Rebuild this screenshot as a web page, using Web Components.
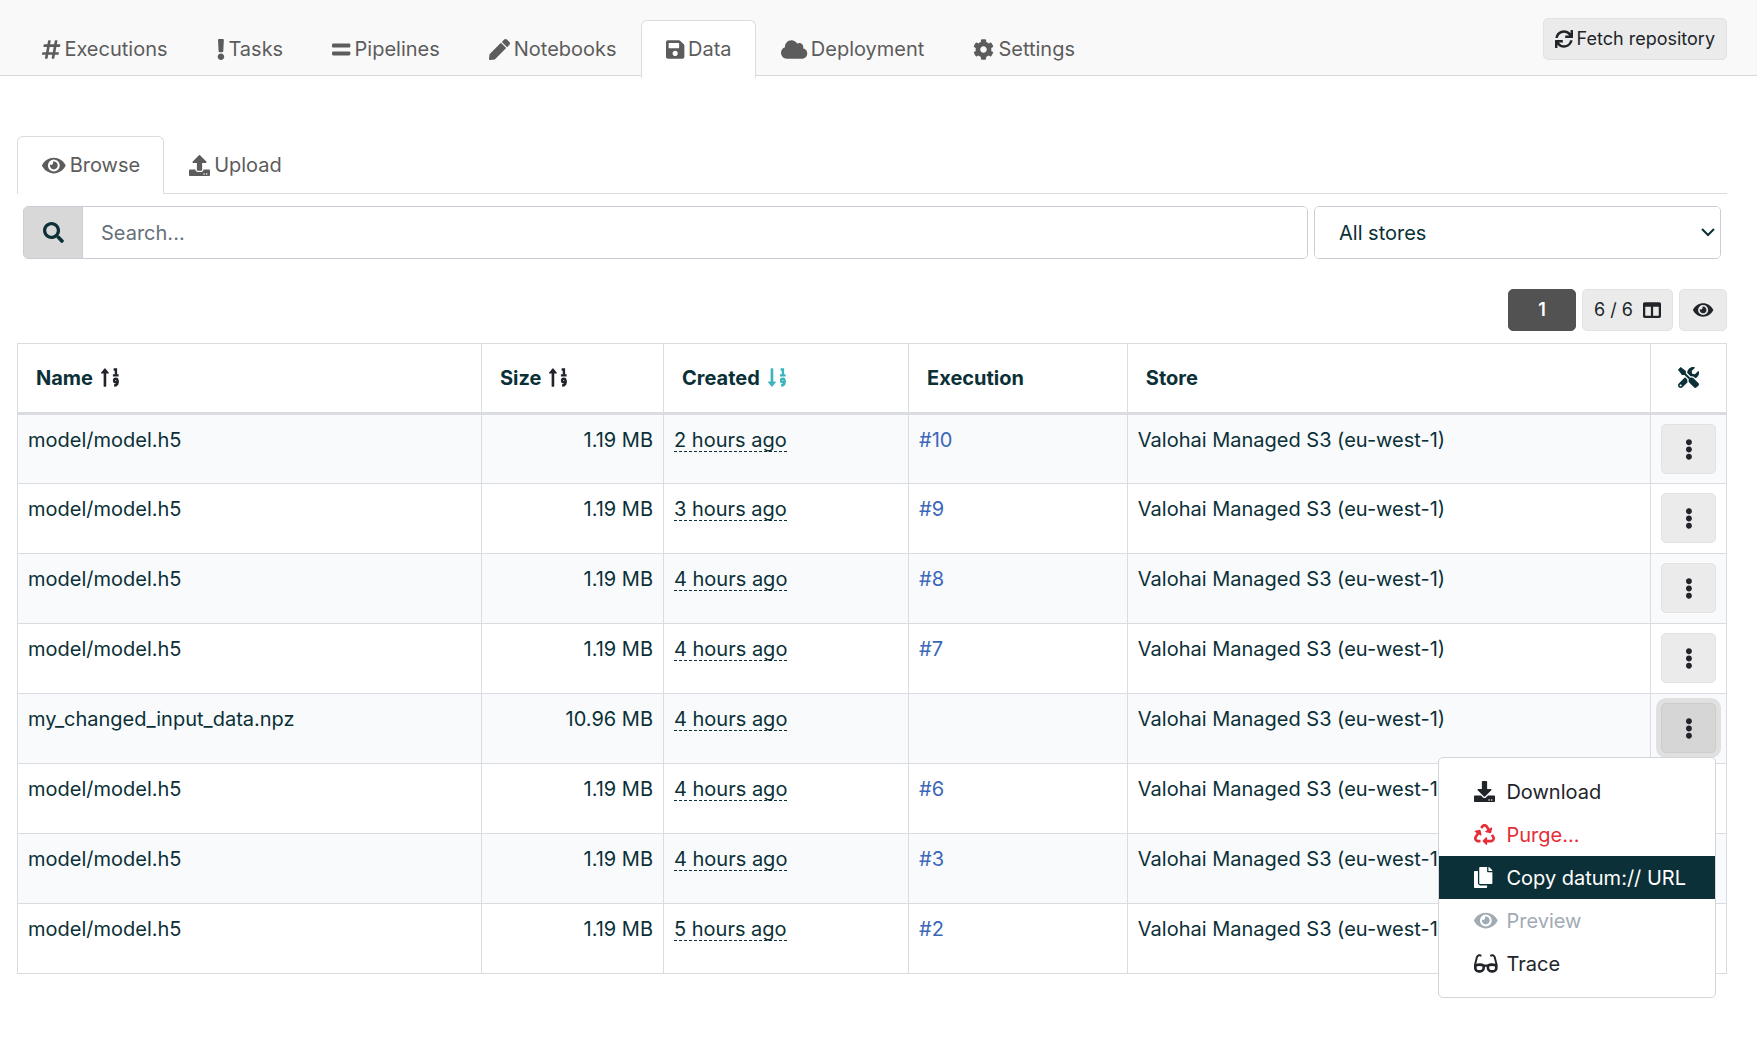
<!DOCTYPE html>
<html lang="en">
<head>
<meta charset="utf-8">
<title>Data</title>
<style>
  body {
    margin: 0;
    min-height: 100vh;
    background: #fff;
    color: #0b3037;
    font: 20px/30px Inter, "Liberation Sans", sans-serif;
  }
  main { padding: 60px 30px 0 17px; }
</style>
</head>
<body>
<page-header>
  <tab-item icon="hashtag">Executions</tab-item>
  <tab-item icon="exclamation">Tasks</tab-item>
  <tab-item icon="equals">Pipelines</tab-item>
  <tab-item icon="pen">Notebooks</tab-item>
  <tab-item icon="save" active>Data</tab-item>
  <tab-item icon="cloud">Deployment</tab-item>
  <tab-item icon="cog">Settings</tab-item>
  <tool-button slot="action" icon="sync">Fetch repository</tool-button>
</page-header>
<main>
  <tab-strip>
    <tab-item icon="eye" active>Browse</tab-item>
    <tab-item icon="upload">Upload</tab-item>
  </tab-strip>
  <search-bar></search-bar>
  <table-toolbar>
    <tool-button primary>1</tool-button>
    <tool-button icon="columns" icon-after>6 / 6</tool-button>
    <tool-button icon="eye" label="Visibility"></tool-button>
  </table-toolbar>
  <datum-table></datum-table>
</main>

<script>
const ICONS = {
  hashtag: [448, 'M440.667 182.109l7.143-40c1.313-7.355-4.342-14.109-11.813-14.109h-74.81l14.623-81.891C377.123 38.754 371.468 32 363.997 32h-40.632a12 12 0 0 0-11.813 9.891L296.175 128H197.54l14.623-81.891C213.477 38.754 207.822 32 200.35 32h-40.632a12 12 0 0 0-11.813 9.891L132.528 128H53.432a12 12 0 0 0-11.813 9.891l-7.143 40C33.163 185.246 38.818 192 46.289 192h74.81L98.242 320H19.146a12 12 0 0 0-11.813 9.891l-7.143 40C-1.123 377.246 4.532 384 12.003 384h74.81L72.19 465.891C70.877 473.246 76.532 480 84.003 480h40.632a12 12 0 0 0 11.813-9.891L151.826 384h98.634l-14.623 81.891C234.523 473.246 240.178 480 247.65 480h40.632a12 12 0 0 0 11.813-9.891L315.472 384h79.096a12 12 0 0 0 11.813-9.891l7.143-40c1.313-7.355-4.342-14.109-11.813-14.109h-74.81l22.857-128h79.096a12 12 0 0 0 11.813-9.891zM261.889 320h-98.634l22.857-128h98.634l-22.857 128z'],
  exclamation: [192, 'M176 432c0 44.112-35.888 80-80 80s-80-35.888-80-80 35.888-80 80-80 80 35.888 80 80zM25.26 25.199l13.6 272C39.499 309.972 50.041 320 62.83 320h66.34c12.789 0 23.331-10.028 23.97-22.801l13.6-272C167.425 11.49 156.496 0 142.77 0H49.23C35.504 0 24.575 11.49 25.26 25.199z'],
  equals: [448, 'M416 304H32c-17.67 0-32 14.33-32 32v32c0 17.67 14.33 32 32 32h384c17.67 0 32-14.33 32-32v-32c0-17.67-14.33-32-32-32zm0-192H32c-17.67 0-32 14.33-32 32v32c0 17.67 14.33 32 32 32h384c17.67 0 32-14.33 32-32v-32c0-17.67-14.33-32-32-32z'],
  pen: [512, 'M290.74 93.24l128.02 128.02-277.99 277.99-114.14 12.6C11.35 513.54-1.56 500.62.14 485.34l12.7-114.22 277.9-277.88zm207.2-19.06l-60.11-60.11c-18.75-18.75-49.16-18.75-67.91 0l-56.55 56.55 128.02 128.02 56.55-56.55c18.75-18.76 18.75-49.16 0-67.91z'],
  save: [448, 'M433.941 129.941l-83.882-83.882A48 48 0 0 0 316.118 32H48C21.49 32 0 53.49 0 80v352c0 26.51 21.49 48 48 48h352c26.51 0 48-21.49 48-48V163.882a48 48 0 0 0-14.059-33.941zM224 416c-35.346 0-64-28.654-64-64 0-35.346 28.654-64 64-64s64 28.654 64 64c0 35.346-28.654 64-64 64zm96-304.52V212c0 6.627-5.373 12-12 12H76c-6.627 0-12-5.373-12-12V108c0-6.627 5.373-12 12-12h228.52c3.183 0 6.235 1.264 8.485 3.515l3.48 3.48A11.996 11.996 0 0 1 320 111.48z'],
  cloud: [640, 'M537.6 226.6c4.1-10.7 6.4-22.4 6.4-34.6 0-53-43-96-96-96-19.7 0-38.1 6-53.3 16.2C367 64.2 315.3 32 256 32c-88.4 0-160 71.6-160 160 0 2.7.1 5.4.2 8.1C40.2 219.8 0 273.2 0 336c0 79.5 64.5 144 144 144h368c70.7 0 128-57.3 128-128 0-61.9-44-113.6-102.4-125.4z'],
  cog: [512, 'M487.4 315.7l-42.6-24.6c4.3-23.2 4.3-47 0-70.2l42.6-24.6c4.9-2.8 7.1-8.6 5.5-14-11.1-35.6-30-67.8-54.7-94.6-3.8-4.1-10-5.1-14.8-2.3L380.8 110c-17.9-15.4-38.5-27.3-60.8-35.1V25.8c0-5.6-3.9-10.5-9.4-11.7-36.7-8.2-74.3-7.8-109.2 0-5.5 1.2-9.4 6.1-9.4 11.7V75c-22.2 7.9-42.8 19.8-60.8 35.1L88.7 85.5c-4.9-2.8-11-1.9-14.8 2.3-24.7 26.7-43.6 58.9-54.7 94.6-1.7 5.4.6 11.2 5.5 14L67.3 221c-4.3 23.2-4.3 47 0 70.2l-42.6 24.6c-4.9 2.8-7.1 8.6-5.5 14 11.1 35.6 30 67.8 54.7 94.6 3.8 4.1 10 5.1 14.8 2.3l42.6-24.6c17.9 15.4 38.5 27.3 60.8 35.1v49.2c0 5.6 3.9 10.5 9.4 11.7 36.7 8.2 74.3 7.8 109.2 0 5.5-1.2 9.4-6.1 9.4-11.7v-49.2c22.2-7.9 42.8-19.8 60.8-35.1l42.6 24.6c4.9 2.8 11 1.9 14.8-2.3 24.7-26.7 43.6-58.9 54.7-94.6 1.5-5.5-.7-11.3-5.6-14.1zM256 336c-44.1 0-80-35.9-80-80s35.9-80 80-80 80 35.9 80 80-35.9 80-80 80z'],
  sync: [512, 'M440.65 12.57l4 82.77A247.16 247.16 0 0 0 255.83 8C134.73 8 33.91 94.92 12.29 209.82A12 12 0 0 0 24.09 224h49.05a12 12 0 0 0 11.67-9.26 175.91 175.91 0 0 1 317-56.94l-101.46-4.86a12 12 0 0 0-12.57 12v47.41a12 12 0 0 0 12 12H500a12 12 0 0 0 12-12V12a12 12 0 0 0-12-12h-47.37a12 12 0 0 0-11.98 12.57zM255.83 432a175.61 175.61 0 0 1-146-77.8l101.8 4.87a12 12 0 0 0 12.57-12v-47.4a12 12 0 0 0-12-12H12a12 12 0 0 0-12 12V500a12 12 0 0 0 12 12h47.35a12 12 0 0 0 12-12.6l-4.15-82.57A247.17 247.17 0 0 0 255.83 504c121.11 0 221.93-86.92 243.55-201.82a12 12 0 0 0-11.8-14.18h-49.05a12 12 0 0 0-11.67 9.26A175.86 175.86 0 0 1 255.83 432z'],
  eye: [576, 'M572.52 241.4C518.29 135.59 410.93 64 288 64S57.68 135.64 3.48 241.41a32.35 32.35 0 0 0 0 29.19C57.71 376.41 165.07 448 288 448s230.32-71.64 284.52-177.41a32.35 32.35 0 0 0 0-29.19zM288 400a144 144 0 1 1 144-144 143.93 143.93 0 0 1-144 144zm0-240a95.31 95.31 0 0 0-25.31 3.79 47.85 47.85 0 0 1-66.9 66.9A95.78 95.78 0 1 0 288 160z'],
  upload: [512, 'M296 384h-80c-13.3 0-24-10.7-24-24V192h-87.7c-17.8 0-26.7-21.5-14.1-34.1L242.3 5.7c7.5-7.5 19.8-7.5 27.3 0l152.2 152.2c12.6 12.6 3.7 34.1-14.1 34.1H320v168c0 13.3-10.7 24-24 24zm216-8v112c0 13.3-10.7 24-24 24H24c-13.3 0-24-10.7-24-24V376c0-13.3 10.7-24 24-24h136v8c0 30.9 25.1 56 56 56h80c30.9 0 56-25.1 56-56v-8h136c13.3 0 24 10.7 24 24zm-124 88c0-11-9-20-20-20s-20 9-20 20 9 20 20 20 20-9 20-20zm64 0c0-11-9-20-20-20s-20 9-20 20 9 20 20 20 20-9 20-20z'],
  download: [512, 'M216 0h80c13.3 0 24 10.7 24 24v168h87.7c17.8 0 26.7 21.5 14.1 34.1L269.7 378.3c-7.5 7.5-19.8 7.5-27.3 0L90.1 226.1c-12.6-12.6-3.7-34.1 14.1-34.1H192V24c0-13.3 10.7-24 24-24zm296 376v112c0 13.3-10.7 24-24 24H24c-13.3 0-24-10.7-24-24V376c0-13.3 10.7-24 24-24h146.7l49 49c20.1 20.1 52.5 20.1 72.6 0l49-49H488c13.3 0 24 10.7 24 24zm-124 88c0-11-9-20-20-20s-20 9-20 20 9 20 20 20 20-9 20-20zm64 0c0-11-9-20-20-20s-20 9-20 20 9 20 20 20 20-9 20-20z'],
  search: [512, 'M505 442.7L405.3 343c-4.5-4.5-10.6-7-17-7H372c27.6-35.3 44-79.7 44-128C416 93.1 322.9 0 208 0S0 93.1 0 208s93.1 208 208 208c48.3 0 92.7-16.4 128-44v16.3c0 6.4 2.5 12.5 7 17l99.7 99.7c9.4 9.4 24.6 9.4 33.9 0l28.3-28.3c9.4-9.4 9.4-24.6.1-34zM208 336c-70.7 0-128-57.2-128-128 0-70.7 57.2-128 128-128 70.7 0 128 57.2 128 128 0 70.7-57.2 128-128 128z'],
  columns: [512, 'M464 32H48C21.49 32 0 53.49 0 80v352c0 26.51 21.49 48 48 48h416c26.51 0 48-21.49 48-48V80c0-26.51-21.49-48-48-48zM224 416H64V160h160v256zm224 0H288V160h160v256z'],
  tools: [512, 'M501.1 395.7L384 278.6c-23.1-23.1-57.6-27.6-85.4-13.9L192 158.1V96L64 0 0 64l96 128h62.1l106.6 106.6c-13.6 27.8-9.2 62.3 13.9 85.4l117.1 117.1c14.6 14.6 38.2 14.6 52.7 0l52.7-52.7c14.5-14.6 14.5-38.2 0-52.7zM331.7 225c28.3 0 54.9 11 74.9 31l19.4 19.4c15.8-6.9 30.8-16.5 43.8-29.5 37.1-37.1 49.7-89.3 37.9-136.7-2.2-9-13.5-12.1-20.1-5.5l-74.4 74.4-67.9-11.3L334 98.9l74.4-74.4c6.6-6.6 3.4-17.9-5.7-20.2-47.4-11.7-99.6.9-136.6 37.9-28.5 28.5-41.9 66.1-41.2 103.6l82.1 82.1c8.1-1.9 16.5-2.9 24.7-2.9zm-103.9 82l-56.7-56.7L18.7 402.8c-25 25-25 65.5 0 90.5s65.5 25 90.5 0l123.6-123.6c-7.6-19.9-9.9-41.6-5-62.7zM64 472c-13.2 0-24-10.8-24-24 0-13.3 10.7-24 24-24s24 10.7 24 24c0 13.2-10.7 24-24 24z'],
  dots: [192, 'M96 184c39.8 0 72 32.2 72 72s-32.2 72-72 72-72-32.2-72-72 32.2-72 72-72zM24 80c0 39.8 32.2 72 72 72s72-32.2 72-72S135.8 8 96 8 24 40.2 24 80zm0 352c0 39.8 32.2 72 72 72s72-32.2 72-72-32.2-72-72-72-72 32.2-72 72z'],
  recycle: [512, 'M184.561 261.903c3.232 13.997-12.123 24.635-24.068 17.168l-40.736-25.455-50.867 81.402C55.606 356.273 70.96 384 96.012 384H148c6.627 0 12 5.373 12 12v40c0 6.627-5.373 12-12 12H96.115c-75.334 0-121.302-83.048-81.408-146.88l50.822-81.388-40.725-25.448c-12.081-7.547-8.966-25.961 4.879-29.158l110.237-25.45c8.611-1.988 17.201 3.381 19.189 11.99l25.452 110.237zm98.561-182.915l41.289 66.076-40.74 25.457c-12.051 7.528-9 25.953 4.879 29.158l110.237 25.45c8.672 1.999 17.215-3.438 19.189-11.99l25.45-110.237c3.197-13.844-11.99-24.719-24.068-17.168l-40.687 25.424-41.263-66.082c-37.521-60.033-125.209-60.171-162.816 0l-17.963 28.766c-3.51 5.62-1.8 13.021 3.82 16.533l33.919 21.195c5.62 3.512 13.024 1.803 16.536-3.817l17.961-28.743c12.712-20.341 41.973-19.676 54.257-.022zM497.288 301.12l-27.515-44.065c-3.511-5.623-10.916-7.334-16.538-3.821l-33.861 21.159c-5.62 3.512-7.33 10.915-3.818 16.536l27.564 44.112c13.257 21.211-2.057 48.96-27.136 48.96H320V336.02c0-14.213-17.242-21.383-27.313-11.313l-80 79.981c-6.249 6.248-6.249 16.379 0 22.627l80 79.989C302.689 517.308 320 510.3 320 495.989V448h95.88c75.274 0 121.335-82.997 81.408-146.88z'],
  copy: [448, 'M320 448v40c0 13.255-10.745 24-24 24H24c-13.255 0-24-10.745-24-24V120c0-13.255 10.745-24 24-24h72v296c0 30.879 25.121 56 56 56h168zm0-344V0H152c-13.255 0-24 10.745-24 24v368c0 13.255 10.745 24 24 24h272c13.255 0 24-10.745 24-24V128H344c-13.2 0-24-10.8-24-24zm120.971-31.029L375.029 7.029A24 24 0 0 0 358.059 0H352v96h96v-6.059a24 24 0 0 0-7.029-16.97z'],
  glasses: [576, 'M574.1 280.37L528.75 98.66c-5.91-23.7-21.59-44.05-43-55.81-21.44-11.73-46.97-14.11-70.19-6.33l-15.25 5.08c-8.39 2.79-12.92 11.86-10.12 20.24l5.06 15.18c2.79 8.38 11.85 12.91 20.23 10.12l13.18-4.39c10.87-3.62 23-3.57 33.16 1.73 10.29 5.37 17.57 14.56 20.37 25.82l38.46 153.82c-22.19-6.81-49.79-12.46-81.2-12.46-34.77 0-73.98 7.02-114.85 26.74h-73.18c-40.87-19.74-80.08-26.75-114.86-26.75-31.42 0-59.02 5.65-81.21 12.46l38.46-153.83c2.79-11.25 10.09-20.45 20.38-25.81 10.16-5.3 22.28-5.35 33.15-1.73l13.17 4.39c8.38 2.79 17.44-1.74 20.23-10.12l5.06-15.18c2.8-8.38-1.73-17.45-10.12-20.24l-15.25-5.08c-23.22-7.78-48.75-5.41-70.19 6.33-21.41 11.77-37.09 32.11-43 55.8L1.9 280.37A64.218 64.218 0 0 0 0 295.86v70.25C0 429.01 51.58 480 115.2 480h37.12c60.28 0 110.37-45.94 114.88-105.37l2.93-38.63h35.75l2.93 38.63C313.31 434.06 363.4 480 423.68 480h37.12c63.62 0 115.2-50.99 115.2-113.88v-70.25c0-5.23-.64-10.43-1.9-15.5zm-370.72 89.42c-1.97 25.91-24.4 46.21-51.06 46.21H115.2C86.97 416 64 393.62 64 366.11v-37.54c18.12-6.49 43.42-12.92 72.58-12.92 23.86 0 47.26 4.33 69.93 12.92l-3.13 41.22zM512 366.12c0 27.51-22.97 49.88-51.2 49.88h-37.12c-26.67 0-49.1-20.3-51.06-46.21l-3.13-41.22c22.67-8.59 46.08-12.92 69.95-12.92 29.12 0 54.43 6.44 72.55 12.92v37.55z'],
};

/* Sort icons: an arrow with two small numerals, drawn with strokes on a 448-unit-wide grid. */
const NUMERALS = '<g fill="none" stroke="currentColor" stroke-width="58"><path d="M308 62h56v134M290 203h140"/><circle cx="360" cy="330" r="42"/><path d="M404 328v44q0 78-84 80"/></g>';
const SORT = {
  'sort-up': '<path d="M176 160h-48v304q0 16-16 16H80q-16 0-16-16V160H16c-14 0-21-17-11-27l80-96q11-10 22 0l80 96c10 10 3 27-11 27z"/>' + NUMERALS,
  'sort-down': '<path d="M176 352h-48V48q0-16-16-16H80q-16 0-16 16v304H16c-14 0-21 17-11 27l80 96q11 10 22 0l80-96c10-10 3-27-11-27z"/>' + NUMERALS,
};

class BaseElement extends HTMLElement {
  connectedCallback() {
    if (this.shadowRoot) return;
    this.attachShadow({ mode: 'open' }).innerHTML = this.render();
  }
}

customElements.define('app-icon', class extends BaseElement {
  render() {
    const name = this.getAttribute('name');
    const [width, path] = ICONS[name] || [448, ''];
    const body = SORT[name] || `<path d="${path}"/>`;
    return `<style>
      :host { display: inline-flex; flex: none; height: 1em; }
      svg { height: 1em; width: auto; fill: currentColor; overflow: visible; }
    </style><svg viewBox="0 0 ${width} 512" aria-hidden="true">${body}</svg>`;
  }
});

customElements.define('tab-item', class extends BaseElement {
  render() {
    return `<style>
      :host { display: block; }
      a {
        display: flex; align-items: center; gap: 4px;
        padding: 13px 23px 14px 24px;
        border: 1px solid transparent; border-bottom: 0;
        border-radius: 6px 6px 0 0;
        color: #5c5c5c; text-decoration: none;
      }
      :host([active]) a { background: #fff; border-color: #dadce2; }
      app-icon { font-size: 21px; }
    </style><a href="#"><app-icon name="${this.getAttribute('icon')}"></app-icon><slot></slot></a>`;
  }
});

customElements.define('tab-strip', class extends BaseElement {
  render() {
    return `<style>
      :host { display: flex; box-shadow: inset 0 -1px #dadce2; }
    </style><slot></slot>`;
  }
});

customElements.define('page-header', class extends BaseElement {
  render() {
    return `<style>
      :host {
        display: flex; justify-content: space-between; align-items: flex-start;
        padding: 18px 30px 0 17px;
        background: #f9f9f9; box-shadow: inset 0 -1px #d6d7da;
      }
      nav { display: flex; padding-top: 2px; margin-bottom: -2px; }
    </style><nav><slot></slot></nav><slot name="action"></slot>`;
  }
});

customElements.define('tool-button', class extends BaseElement {
  render() {
    const icon = this.getAttribute('icon');
    const label = this.getAttribute('label');
    return `<style>
      :host { display: block; }
      button {
        display: flex; align-items: center; justify-content: center; gap: 4px;
        height: 42px; min-width: 48px; padding: 0 11px;
        border: 1px solid #e2e2e2; border-radius: 5px;
        background: #ebebeb; color: #212529;
        font: inherit; font-size: 18px;
      }
      app-icon { font-size: 18px; }
      :host([icon-after]) button { flex-direction: row-reverse; gap: 10px; }
      :host([primary]) button { width: 68px; background: #525252; border-color: #525252; color: #fff; font-weight: 600; }
    </style><button type="button"${label ? ` aria-label="${label}"` : ''}>${icon ? `<app-icon name="${icon}"></app-icon>` : ''}<slot></slot></button>`;
  }
});

customElements.define('search-bar', class extends BaseElement {
  render() {
    return `<style>
      :host { display: grid; grid-template-columns: minmax(0, 1285fr) minmax(0, 407fr); gap: 6px; padding: 12px 6px; }
      .group, .select { display: flex; height: 53px; box-sizing: border-box; border: 1px solid #c9ced6; border-radius: 5px; overflow: hidden; position: relative; }
      label { display: flex; align-items: center; justify-content: center; width: 59px; box-sizing: border-box; background: #d8d8d8; border-right: 1px solid #c9ced6; }
      label app-icon { font-size: 21px; }
      input, select { flex: 1; min-width: 0; margin: 0; border: 0; outline: 0; background: #fff; color: #0b3037; font: inherit; appearance: none; }
      input { padding: 0 18px; }
      input::placeholder { color: #66707a; opacity: 1; }
      select { padding: 0 24px; }
      .chevron { position: absolute; right: 5px; top: 20px; width: 14px; height: 10px; pointer-events: none; fill: none; stroke: #0b3037; stroke-width: 2; }
    </style>
    <div class="group"><label for="q"><app-icon name="search"></app-icon></label><input id="q" type="text" placeholder="Search..." aria-label="Search"></div>
    <div class="select"><select aria-label="Store"><option>All stores</option></select>
      <svg class="chevron" viewBox="0 0 14 10"><path d="M1 2l6 6 6-6"/></svg></div>`;
  }
});

customElements.define('table-toolbar', class extends BaseElement {
  render() {
    return `<style>
      :host { display: flex; justify-content: flex-end; gap: 6px; padding: 18px 0 12px; }
    </style><slot></slot>`;
  }
});

customElements.define('row-menu', class extends BaseElement {
  render() {
    const items = [['download', 'Download', ''], ['recycle', 'Purge...', 'danger'], ['copy', 'Copy datum:// URL', 'active'], ['eye', 'Preview', 'disabled'], ['glasses', 'Trace', '']];
    return `<style>
      :host { display: block; }
      ul { margin: 0; padding: 12px 0; list-style: none; background: #fff; border: 1px solid #d3d5d8; border-radius: 5px; }
      button {
        display: grid; grid-template-columns: 24px auto; gap: 8px; align-items: center; justify-content: start;
        width: 100%; height: 43px; padding: 0 29px 0 35px; border: 0; background: none;
        color: #212529; font: inherit; text-align: left; white-space: nowrap;
      }
      app-icon { font-size: 21px; }
      .danger { color: #e62e39; }
      .active { background: #0b3037; color: #fff; }
      .disabled { color: #a1abb4; }
    </style><ul role="menu">${items.map(([icon, text, kind]) =>
      `<li role="none"><button type="button" role="menuitem" class="${kind}"${kind === 'disabled' ? ' disabled' : ''}><app-icon name="${icon}"></app-icon><span>${text}</span></button></li>`).join('')}</ul>`;
  }
});

customElements.define('row-actions', class extends BaseElement {
  render() {
    return `<style>
      :host { display: block; position: relative; }
      .toggle {
        display: flex; align-items: center; justify-content: center;
        width: 55px; height: 50px; padding: 0;
        border: 1px solid #e2e2e2; border-radius: 5px; background: #ebebeb; color: #212529;
      }
      app-icon { font-size: 21px; }
      :host([open]) .toggle { background: #d6d6d6; border-color: #cdcdcd; box-shadow: 0 0 0 5px #e0e0e0; }
      row-menu { position: absolute; z-index: 1; top: 54px; right: 0; }
    </style><button class="toggle" type="button" aria-label="Actions"><app-icon name="dots"></app-icon></button>${this.hasAttribute('open') ? '<row-menu></row-menu>' : ''}`;
  }
});

const FILES = [
  ['model/model.h5', '1.19 MB', '2 hours ago', '#10'],
  ['model/model.h5', '1.19 MB', '3 hours ago', '#9'],
  ['model/model.h5', '1.19 MB', '4 hours ago', '#8'],
  ['model/model.h5', '1.19 MB', '4 hours ago', '#7'],
  ['my_changed_input_data.npz', '10.96 MB', '4 hours ago', ''],
  ['model/model.h5', '1.19 MB', '4 hours ago', '#6'],
  ['model/model.h5', '1.19 MB', '4 hours ago', '#3'],
  ['model/model.h5', '1.19 MB', '5 hours ago', '#2'],
];

customElements.define('datum-table', class extends BaseElement {
  render() {
    const rows = FILES.map(([name, size, created, execution], i) => `<tr>
      <td>${name}</td><td class="size">${size}</td><td><span class="time">${created}</span></td>
      <td>${execution ? `<a href="#">${execution}</a>` : ''}</td>
      <td>Valohai Managed S3 (eu-west-1)</td><td class="actions"><row-actions${i === 4 ? ' open' : ''}></row-actions></td></tr>`).join('');
    return `<style>
      :host { display: block; }
      table { width: 100%; table-layout: fixed; border-collapse: collapse; }
      th, td { border: 1px solid #dadce2; }
      th { height: 70px; box-sizing: border-box; padding: 0 18px; border-bottom-width: 3px; text-align: left; font-weight: 700; }
      th app-icon { font-size: 21px; color: #212529; margin-left: 8px; vertical-align: -3px; }
      th app-icon.on { color: #3cb4bd; }
      th:last-child { padding: 0; text-align: center; }
      th:last-child app-icon { margin: 0; color: #0b3037; }
      td { height: 70px; box-sizing: border-box; padding: 10px 10px 9px; vertical-align: top; }
      td.actions { padding-top: 9px; }
      tbody tr:nth-child(odd) { background: #f8fafc; }
      .size { text-align: right; }
      .time { border-bottom: 1px dashed #0b3037; line-height: 22px; display: inline-block; margin-top: 4px; }
      a { color: #3a67b8; text-decoration: none; }
    </style>
    <table>
      <colgroup><col style="width:27.15%"><col style="width:10.65%"><col style="width:14.34%"><col style="width:12.8%"><col><col style="width:76px"></colgroup>
      <thead><tr>
        <th>Name<app-icon name="sort-up"></app-icon></th><th>Size<app-icon name="sort-up"></app-icon></th>
        <th>Created<app-icon class="on" name="sort-down"></app-icon></th><th>Execution</th><th>Store</th>
        <th aria-label="Actions"><app-icon name="tools"></app-icon></th></tr></thead>
      <tbody>${rows}</tbody>
    </table>`;
  }
});
</script>
</body>
</html>
